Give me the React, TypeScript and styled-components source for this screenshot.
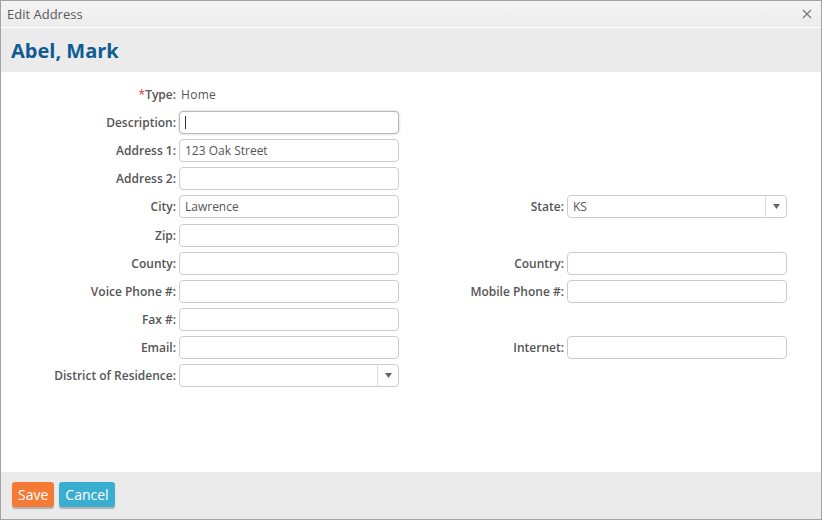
import React from "react";
import styled, { createGlobalStyle } from "styled-components";

const GlobalStyle = createGlobalStyle`
  html, body {
    margin: 0;
    padding: 0;
    background: #ffffff;
  }
  body {
    font-family: "Open Sans", "Liberation Sans", Arial, sans-serif;
  }
  * {
    box-sizing: border-box;
  }
`;

const Window = styled.div`
  width: 822px;
  height: 520px;
  border: 1px solid #a3a3a3;
  display: flex;
  flex-direction: column;
  background: #ffffff;
`;

const TitleBar = styled.div`
  height: 27px;
  flex: none;
  display: flex;
  align-items: center;
  justify-content: space-between;
  padding: 0 8px 1px 6px;
  background: linear-gradient(#f4f4f4, #ececec);
  border-bottom: 1px solid #ffffff;
`;

const TitleText = styled.span`
  font-size: 13px;
  color: #5a5a5a;
`;

const CloseButton = styled.button`
  border: none;
  background: none;
  padding: 0;
  width: 12px;
  height: 12px;
  display: flex;
  align-items: center;
  justify-content: center;
  cursor: pointer;
`;

const Header = styled.div`
  height: 44px;
  flex: none;
  display: flex;
  align-items: center;
  padding: 0 10px;
  background: #ebebeb;
`;

const Name = styled.h1`
  margin: 0;
  font-size: 20px;
  font-weight: 700;
  color: #0f5b93;
`;

const Body = styled.div`
  flex: 1;
  padding-top: 11px;
`;

const FormGrid = styled.div`
  display: grid;
  grid-template-columns: 175px 220px 162px 220px;
  grid-auto-rows: 23px;
  column-gap: 3px;
  row-gap: 5.12px;
`;

const Label = styled.label`
  display: flex;
  align-items: center;
  justify-content: flex-end;
  font-size: 12px;
  font-weight: 600;
  color: #555555;
  white-space: nowrap;
`;

const Required = styled.span`
  color: #e0303a;
  font-weight: 400;
`;

const StaticValue = styled.span`
  display: flex;
  align-items: center;
  padding-left: 2px;
  font-size: 12px;
  color: #555555;
  letter-spacing: 0.3px;
`;

const TextBox = styled.div<{ $focused?: boolean }>`
  display: flex;
  align-items: center;
  height: 23px;
  padding: 0 5px;
  border: 1px solid ${(p) => (p.$focused ? "#b8b8b8" : "#cccccc")};
  border-radius: 4px;
  background: #ffffff;
  font-size: 12px;
  color: #555555;
  box-shadow: ${(p) => (p.$focused ? "0 0 3px rgba(0, 0, 0, 0.2)" : "none")};
`;

const Caret = styled.span`
  width: 1px;
  height: 13px;
  background: #333333;
`;

const SelectBox = styled.div`
  display: flex;
  align-items: stretch;
  height: 23px;
  border: 1px solid #cccccc;
  border-radius: 4px;
  background: #ffffff;
  font-size: 12px;
  color: #555555;
`;

const SelectValue = styled.span`
  flex: 1;
  display: flex;
  align-items: center;
  padding: 0 5px;
`;

const SelectArrow = styled.span`
  width: 21px;
  flex: none;
  display: flex;
  align-items: center;
  justify-content: center;
  border-left: 1px solid #dddddd;
`;

const Spacer = styled.div``;

const Footer = styled.div`
  height: 47px;
  flex: none;
  display: flex;
  align-items: flex-start;
  gap: 5px;
  padding: 10px 11px;
  background: #ebebeb;
`;

const Button = styled.button<{ $tone: "save" | "cancel" }>`
  height: 25px;
  padding: 0 6px;
  border: none;
  border-radius: 3px;
  background: ${(p) => (p.$tone === "save" ? "#f47b36" : "#3aaed1")};
  color: #ffffff;
  font-family: "Open Sans", "Liberation Sans", Arial, sans-serif;
  font-size: 14px;
  box-shadow: 0 2px 1px rgba(0, 0, 0, 0.25);
  cursor: pointer;
`;

const Arrow = () => (
  <svg width="7" height="5" viewBox="0 0 7 5">
    <path d="M0 0 H7 L3.5 5 Z" fill="#666666" />
  </svg>
);

const Field = ({ value, focused }: { value?: string; focused?: boolean }) => (
  <TextBox $focused={focused}>{focused ? <Caret /> : value}</TextBox>
);

const Select = ({ value }: { value?: string }) => (
  <SelectBox>
    <SelectValue>{value}</SelectValue>
    <SelectArrow>
      <Arrow />
    </SelectArrow>
  </SelectBox>
);

export default function App() {
  return (
    <>
      <GlobalStyle />
      <Window>
        <TitleBar>
          <TitleText>Edit Address</TitleText>
          <CloseButton aria-label="Close">
            <svg width="10" height="10" viewBox="0 0 10 10">
              <path d="M1 1 L9 9 M9 1 L1 9" stroke="#777777" strokeWidth="1.2" />
            </svg>
          </CloseButton>
        </TitleBar>
        <Header>
          <Name>Abel, Mark</Name>
        </Header>
        <Body>
          <FormGrid>
            <Label>
              <Required>*</Required>Type:
            </Label>
            <StaticValue>Home</StaticValue>
            <Spacer />
            <Spacer />

            <Label>Description:</Label>
            <Field focused />
            <Spacer />
            <Spacer />

            <Label>Address 1:</Label>
            <Field value="123 Oak Street" />
            <Spacer />
            <Spacer />

            <Label>Address 2:</Label>
            <Field />
            <Spacer />
            <Spacer />

            <Label>City:</Label>
            <Field value="Lawrence" />
            <Label>State:</Label>
            <Select value="KS" />

            <Label>Zip:</Label>
            <Field />
            <Spacer />
            <Spacer />

            <Label>County:</Label>
            <Field />
            <Label>Country:</Label>
            <Field />

            <Label>Voice Phone #:</Label>
            <Field />
            <Label>Mobile Phone #:</Label>
            <Field />

            <Label>Fax #:</Label>
            <Field />
            <Spacer />
            <Spacer />

            <Label>Email:</Label>
            <Field />
            <Label>Internet:</Label>
            <Field />

            <Label>District of Residence:</Label>
            <Select />
            <Spacer />
            <Spacer />
          </FormGrid>
        </Body>
        <Footer>
          <Button $tone="save">Save</Button>
          <Button $tone="cancel">Cancel</Button>
        </Footer>
      </Window>
    </>
  );
}
